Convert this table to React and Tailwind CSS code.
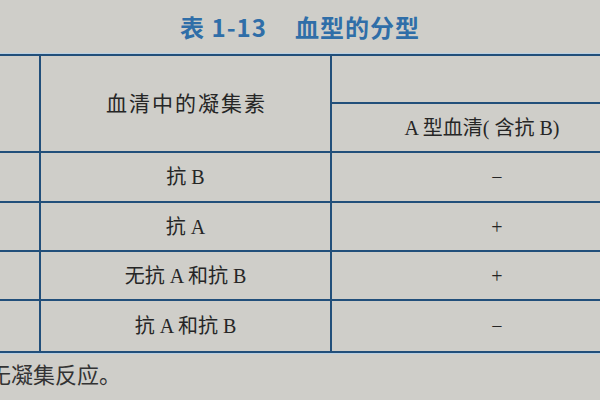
const serif = { fontFamily: '"Liberation Serif", "Noto Sans CJK SC", serif' }

const ROWS = [
  { label: '抗 B', sign: '−', h: 'h-[50px]' },
  { label: '抗 A', sign: '+', h: 'h-[49px]' },
  { label: '无抗 A 和抗 B', sign: '+', h: 'h-[49px]' },
  { label: '抗 A 和抗 B', sign: '−', h: 'h-[50px]' },
]

export default function App() {
  return (
    <div
      className="w-[600px] h-[400px] overflow-hidden bg-[#cfcec9] text-[#262626]"
      style={serif}
    >
      {/* title */}
      <div className="h-[54px] flex items-start justify-center pt-[12px]">
        <h1
          className="text-[24px] font-bold text-[#2f6ea8] tracking-[1px] leading-[30px] whitespace-nowrap"
          style={{ fontFamily: '"Noto Sans CJK SC", "Noto Sans", sans-serif' }}
        >
          表 1-13<span className="inline-block w-[28px]" />血型的分型
        </h1>
      </div>

      {/* table */}
      <div className="w-[600px] border-t-2 border-b-2 border-[#224f7a] shadow-[0_-1px_0_#b9d0e3,0_1px_0_#b9d0e3]">
        {/* header */}
        <div className="flex h-[97px] border-b-2 border-[#224f7a]">
          <div className="w-[41px] shrink-0 border-r-2 border-[#224f7a]" />
          <div className="w-[291px] shrink-0 border-r-2 border-[#224f7a] flex items-center justify-center">
            <span className="text-[21px] tracking-[2px] pt-[2px] pl-[2px] whitespace-nowrap">血清中的凝集素</span>
          </div>
          <div className="w-[268px] shrink-0 flex flex-col">
            <div className="h-[48px] border-b-2 border-[#224f7a]" />
            <div className="flex-1 w-[300px] flex items-center justify-center">
              <span className="text-[20px] whitespace-nowrap">A 型血清( 含抗 B)</span>
            </div>
          </div>
        </div>

        {ROWS.map((r, i) => (
          <div
            key={i}
            className={`flex ${r.h} ${i < ROWS.length - 1 ? 'border-b-2 border-[#224f7a]' : ''}`}
          >
            <div className="w-[41px] shrink-0 border-r-2 border-[#224f7a]" />
            <div className="w-[291px] shrink-0 border-r-2 border-[#224f7a] flex items-center justify-center">
              <span className="text-[20px] whitespace-nowrap">{r.label}</span>
            </div>
            <div className="w-[330px] shrink-0 flex items-center justify-center">
              <span className="text-[20px]">{r.sign}</span>
            </div>
          </div>
        ))}
      </div>

      {/* footnote */}
      <div className="pt-[10px] ml-[-11px] text-[22px] leading-[26px] text-[#333] whitespace-nowrap">
        无凝集反应。
      </div>
    </div>
  )
}
